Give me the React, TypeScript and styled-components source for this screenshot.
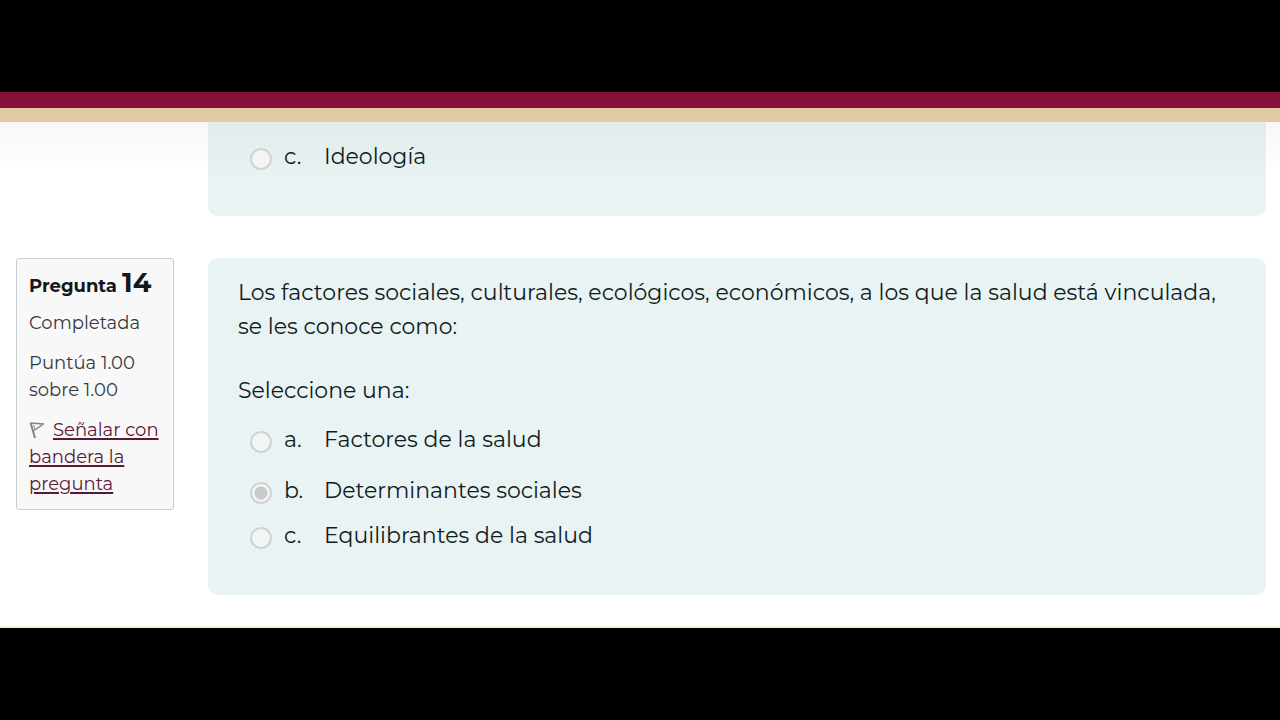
import React from "react";
import styled, { createGlobalStyle } from "styled-components";

const GlobalStyle = createGlobalStyle`
  * { box-sizing: border-box; }
  body {
    margin: 0;
    background: #000;
    font-family: Montserrat, Inter, "Open Sans", sans-serif;
  }
`;

const Frame = styled.div`
  min-height: 100vh;
  padding: 92px 0;
  background: #000;
`;

const Header = styled.header`
  height: 30px;
  background: #dfcaa4;
  border-top: 16px solid #84113a;
`;

const Page = styled.main`
  display: grid;
  grid-template-columns: 158px minmax(0, 1fr);
  column-gap: 34px;
  row-gap: 42px;
  align-items: start;
  padding: 0 14px 31px 16px;
  background: linear-gradient(rgba(0, 0, 0, 0.03), rgba(0, 0, 0, 0) 50px) #fff;
  border-bottom: 2px solid #f3f4df;
`;

const Panel = styled.section<{ $continued?: boolean }>`
  grid-column: 2;
  padding: 18px 30px 42px;
  border-radius: ${(p) => (p.$continued ? "0 0 10px 10px" : "10px")};
  background: ${(p) =>
    p.$continued
      ? "linear-gradient(rgba(0, 0, 0, 0.03), rgba(0, 0, 0, 0) 60px) #e9f3f4"
      : "#e9f3f4"};
  color: #101c20;
  font-size: 22px;
  line-height: 34px;
`;

const Prompt = styled.p`
  margin: 0 0 30px;
`;

const Answers = styled.fieldset`
  margin: 0;
  padding: 0;
  border: 0;
  min-width: 0;
`;

const Legend = styled.legend`
  padding: 0 0 15px;
`;

const Option = styled.label<{ $gap?: number }>`
  display: flex;
  align-items: flex-start;
  padding-left: 12px;
  margin-bottom: ${(p) => p.$gap ?? 0}px;
`;

const Radio = styled.input`
  appearance: none;
  flex: none;
  width: 22px;
  height: 22px;
  margin: 8px 12px 0 0;
  border: 2px solid #d0d3d3;
  border-radius: 50%;
  background: #f3f4f4;

  &:checked {
    background: radial-gradient(circle, #c9caca 6px, #f3f4f4 7px);
  }
`;

const Letter = styled.span`
  flex: none;
  width: 40px;
`;

const Info = styled.aside`
  padding: 8px 12px 11px;
  border: 1px solid #cacdd0;
  border-radius: 3px;
  background: #f8f8f8;
  color: #373a3c;
  font-size: 18px;
  line-height: 27px;
`;

const Title = styled.h2`
  margin: 0 0 8px;
  color: #14171a;
  font-size: 18px;
  font-weight: 700;
  line-height: 32px;
  white-space: nowrap;
`;

const QuestionNumber = styled.span`
  font-size: 27px;
`;

const InfoText = styled.p`
  margin: 0 0 13px;
  &:last-child { margin-bottom: 0; }
`;

const FlagLink = styled.a`
  color: #5b1838;
  text-decoration: underline;
  text-decoration-thickness: 2px;
  text-underline-offset: 2px;
`;

const Flag = styled.svg`
  width: 16px;
  height: 18px;
  margin-right: 8px;
  vertical-align: -3px;
`;

type OptionData = { letter: string; text: string; checked?: boolean; gap?: number };

const options: OptionData[] = [
  { letter: "a.", text: "Factores de la salud", gap: 17 },
  { letter: "b.", text: "Determinantes sociales", checked: true, gap: 11 },
  { letter: "c.", text: "Equilibrantes de la salud" },
];

function Answer({ name, option }: { name: string; option: OptionData }) {
  return (
    <Option $gap={option.gap}>
      <Radio type="radio" name={name} defaultChecked={option.checked} disabled />
      <Letter>{option.letter}</Letter>
      <span>{option.text}</span>
    </Option>
  );
}

export default function App() {
  return (
    <Frame>
      <GlobalStyle />
      <Header />
      <Page>
        <Panel $continued>
          <Answer name="q13" option={{ letter: "c.", text: "Ideología" }} />
        </Panel>
        <Info>
          <Title>
            Pregunta <QuestionNumber>14</QuestionNumber>
          </Title>
          <InfoText>Completada</InfoText>
          <InfoText>
            Puntúa 1.00
            <br />
            sobre 1.00
          </InfoText>
          <InfoText>
            <Flag viewBox="0 0 16 18" fill="none" stroke="#858585" aria-hidden="true">
              <path d="M1.5 1.5 L6 17" strokeWidth="2" />
              <path d="M2 2 L14.5 3 L5 9.5" strokeWidth="1.5" strokeLinejoin="round" />
              <path d="M4.5 4 L6 8" strokeWidth="1" />
            </Flag>
            <FlagLink href="#flag">Señalar con bandera la pregunta</FlagLink>
          </InfoText>
        </Info>
        <Panel>
          <Prompt>
            Los factores sociales, culturales, ecológicos, económicos, a los que la salud está
            vinculada, se les conoce como:
          </Prompt>
          <Answers>
            <Legend>Seleccione una:</Legend>
            {options.map((option) => (
              <Answer key={option.letter} name="q14" option={option} />
            ))}
          </Answers>
        </Panel>
      </Page>
    </Frame>
  );
}
